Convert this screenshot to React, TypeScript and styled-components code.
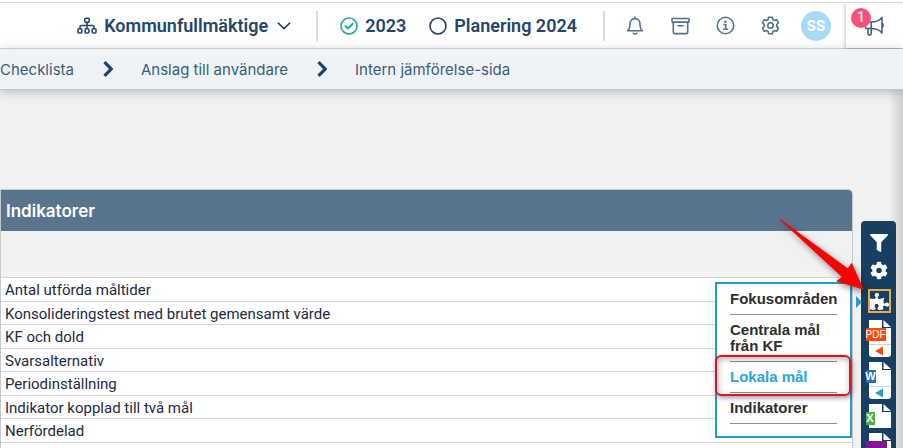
import React from "react";
import styled, { createGlobalStyle } from "styled-components";
import { FaFilter, FaCog, FaPuzzlePiece } from "react-icons/fa";

const GlobalStyle = createGlobalStyle`
  *, *::before, *::after { box-sizing: border-box; }
  html, body { margin: 0; padding: 0; overflow: hidden; background: #f1f1f1; }
  body { font-family: Roboto, "Liberation Sans", sans-serif; }
  button { font: inherit; color: inherit; background: none; border: 0; padding: 0; cursor: pointer; }
`;

const Page = styled.div`
  position: relative;
  height: 100vh;
  overflow: hidden;
  display: flex;
  flex-direction: column;
`;

const Header = styled.header`
  display: flex;
  justify-content: flex-end;
  align-items: stretch;
  flex: none;
  height: 49px;
  padding-top: 3px;
  background: linear-gradient(#fff 2px, #d9dadd 2px, #d9dadd 3px, #fff 3px);
  border-bottom: 1px solid #d3dbe2;
  color: #24466b;
`;

const HeaderGroup = styled.div<{ $gap: number; $left: number; $right: number }>`
  display: flex;
  align-items: center;
  gap: ${(p) => p.$gap}px;
  padding: 0 ${(p) => p.$right}px 0 ${(p) => p.$left}px;
`;

const Divider = styled.span`
  align-self: center;
  width: 2px;
  height: 30px;
  background: #d5dde4;
`;

const HeaderButton = styled.button`
  display: flex;
  align-items: center;
  gap: 7px;
  font-size: 18px;
  line-height: 24px;
  font-weight: 600;
  white-space: nowrap;
  svg { flex: none; }
`;

const IconButton = styled.button`
  display: flex;
  width: 20px;
  height: 20px;
  align-items: center;
  justify-content: center;
  color: #50718e;
`;

const Avatar = styled.button`
  width: 30px;
  height: 30px;
  margin-right: 15px;
  align-self: center;
  border-radius: 50%;
  background: #a6daf7;
  color: #fff;
  font-family: Inter, sans-serif;
  font-size: 14px;
  font-weight: 700;
  line-height: 30px;
  text-align: center;
`;

const NewsButton = styled.button`
  position: relative;
  width: 57px;
  display: flex;
  align-items: center;
  justify-content: center;
  padding-right: 1px;
  background: #fff;
  color: #42637f;
  box-shadow: 0 1px 4px rgba(40, 70, 100, 0.45);
  clip-path: inset(0 0 -4px -4px);
`;

const Badge = styled.span`
  position: absolute;
  left: 5px;
  top: 5px;
  width: 20px;
  height: 20px;
  border-radius: 50%;
  background: #fb4f78;
  color: #fff;
  font-size: 14px;
  font-weight: 500;
  line-height: 19px;
  text-align: center;
`;

const Breadcrumbs = styled.nav`
  position: relative;
  display: flex;
  align-items: center;
  flex: none;
  gap: 28px;
  height: 41px;
  background: #eff3f5;
  border-bottom: 1px solid #c0c8cf;
  box-shadow: 0 2px 10px rgba(60, 80, 100, 0.35);
  color: #1b4466;
`;

const Crumb = styled.a`
  padding-top: 2px;
  color: #38607e;
  font-family: Inter, sans-serif;
  font-size: 15px;
  line-height: 20px;
  text-decoration: none;
  white-space: nowrap;
`;

const Main = styled.main`
  display: flex;
  align-items: flex-start;
  flex: 1;
  gap: 8px;
  padding: 99px 7px 0 0;
  background: linear-gradient(to left, #cfcfcf, #f1f1f1 14px);
`;

const TableFrame = styled.div`
  flex: 1;
  border: 1px solid #c3c8ce;
  border-radius: 0 5px 0 0;
  overflow: hidden;
`;

const Table = styled.table`
  width: 100%;
  border-collapse: collapse;
  color: #222b3f;
  font-size: 15px;
  line-height: 20px;
`;

const HeadCell = styled.th`
  height: 41px;
  padding: 0 5px;
  background: #58758d;
  color: #fff;
  font-family: Inter, sans-serif;
  font-size: 17px;
  font-weight: 600;
  text-align: left;
`;

const FilterCell = styled.td`
  height: 46px;
  padding: 0;
  background: #f1f1f1;
  border-bottom: 1px solid #d3d5d8;
`;

const Row = styled.tr`
  height: 23px;
  background: #fff;
  &:nth-child(odd) { height: 24px; }
`;

const Cell = styled.td`
  padding: 2px 4px 0;
  border-bottom: 1px solid #d3d5d8;
`;

const Toolbar = styled.aside`
  position: relative;
  flex: none;
  display: flex;
  flex-direction: column;
  align-items: center;
  width: 35px;
  margin-top: 32px;
  padding: 12px 0;
  border-radius: 4px;
  background: #163f61;
  color: #fff;
`;

const Tool = styled.button<{ $active?: boolean }>`
  display: flex;
  align-items: center;
  justify-content: center;
  width: ${(p) => (p.$active ? 23 : 18)}px;
  height: ${(p) => (p.$active ? 24 : 19)}px;
  margin-bottom: ${(p) => (p.$active ? 7 : 9)}px;
  margin-left: ${(p) => (p.$active ? 2 : 0)}px;
  border: ${(p) => (p.$active ? "2px solid #eda951" : "0")};
`;

const DocTool = styled.button<{ $tall?: boolean }>`
  position: relative;
  display: block;
  width: 22px;
  height: ${(p) => (p.$tall ? 37 : 24)}px;
  margin: 0 0 5px 2px;
  svg { display: block; }
`;

const DocLabel = styled.span<{ $color: string; $w: number }>`
  position: absolute;
  left: -3px;
  top: 8px;
  width: ${(p) => p.$w}px;
  height: 13px;
  display: flex;
  justify-content: center;
  background: ${(p) => p.$color};
  color: #fff;
  font-family: "Liberation Sans", sans-serif;
  font-size: ${(p) => (p.$w === 20 ? 10 : 11)}px;
  font-weight: ${(p) => (p.$w === 20 ? 400 : 700)};
  line-height: 13px;
`;

const Pointer = styled.span`
  position: absolute;
  left: -5px;
  top: 75px;
  border: 6px solid transparent;
  border-right: 0;
  border-left: 6px solid #2a9ac8;
`;

const Menu = styled.nav`
  position: absolute;
  right: 44px;
  top: 61px;
  width: 137px;
  padding: 0 13px 12px;
  border: 2px solid #2a9ac8;
  background: #fff;
`;

const MenuLink = styled.a<{ $current?: boolean }>`
  display: block;
  padding: 7px 0;
  border-bottom: 1px solid #8f8f8f;
  color: ${(p) => (p.$current ? "#2ea3dd" : "#2e2e2e")};
  font-family: "Liberation Sans", Arial, sans-serif;
  font-size: 15px;
  font-weight: 700;
  line-height: 16px;
  text-decoration: none;
`;

const Highlight = styled.span`
  position: absolute;
  right: 45px;
  top: 134px;
  width: 136px;
  height: 41px;
  border: 2px solid #dc1620;
  border-radius: 6px;
  box-shadow: 1px 2px 5px rgba(0, 0, 0, 0.4), inset 1px 2px 6px rgba(0, 0, 0, 0.3);
  pointer-events: none;
`;

const Arrow = styled.svg`
  position: absolute;
  right: 31px;
  top: -12px;
  overflow: visible;
  filter: drop-shadow(2px 3px 3px rgba(0, 0, 0, 0.45));
  pointer-events: none;
`;

const stroke = {
  fill: "none",
  stroke: "currentColor",
  strokeWidth: 1.6,
  strokeLinecap: "round" as const,
  strokeLinejoin: "round" as const,
};

const OrgIcon = () => (
  <svg width="20" height="18" viewBox="0 0 20 18" {...stroke}>
    <rect x="7.8" y="1.2" width="4.4" height="4.2" rx="1" />
    <path d="M10 5.5v6M3 11.5V9.800a1.300 1.300 0 0 1 1.300-1.300h11.400A1.300 1.300 0 0 1 17 9.800v1.700" />
    <rect x="1" y="11.8" width="3.8" height="4.2" rx="1" />
    <rect x="8.1" y="11.8" width="3.8" height="4.2" rx="1" />
    <rect x="15.2" y="11.8" width="3.8" height="4.2" rx="1" />
  </svg>
);

const ChevronDown = () => (
  <svg width="16" height="8" viewBox="0 0 16 8" {...stroke}>
    <path d="M3.300 1.200 9 6.600l5.700-5.400" />
  </svg>
);

const ChevronRight = () => (
  <svg width="11" height="16" viewBox="0 0 11 16" fill="none" stroke="currentColor" strokeWidth="3.2">
    <path d="M2.500 1.200 9.300 8l-6.800 6.800" />
  </svg>
);

const CheckCircle = () => (
  <svg width="18" height="18" viewBox="0 0 18 18" {...stroke} stroke="#1fa9ab">
    <circle cx="9" cy="9" r="8" />
    <path d="m5.500 9.200 2.500 2.300 4.600-4.600" strokeWidth="2" />
  </svg>
);

const EmptyCircle = () => (
  <svg width="18" height="18" viewBox="0 0 18 18" {...stroke}>
    <circle cx="9" cy="9" r="8" />
  </svg>
);

const BellIcon = () => (
  <svg width="18" height="19" viewBox="0 0 18 19" {...stroke}>
    <path d="M9 1v1.500M1.700 14.700c1.700-1.300 2.300-3 2.300-7C4 4.700 6.200 2.600 9 2.600s5 2.100 5 5.100c0 4 .6 5.700 2.300 7zM7.300 17.300c.8.800 2.600.8 3.400 0" />
  </svg>
);

const ArchiveIcon = () => (
  <svg width="19" height="18" viewBox="0 0 19 18" {...stroke}>
    <rect x="1" y="1.5" width="17" height="3.6" rx=".6" />
    <path d="M2.300 5.200v10a1.400 1.400 0 0 0 1.400 1.400h11.600a1.400 1.400 0 0 0 1.400-1.400v-10M7 8.800h5" />
  </svg>
);

const InfoIcon = () => (
  <svg width="19" height="19" viewBox="0 0 19 19" {...stroke}>
    <circle cx="9.5" cy="9.5" r="8.2" />
    <path d="M8 8.500h1.700v4.700M7.700 13.300h4" />
    <circle cx="9.4" cy="5.7" r=".5" />
  </svg>
);

const GearIcon = () => (
  <svg width="19" height="19" viewBox="0 0 19 19" {...stroke}>
    <path d="M7.700 1.200h3.600l.6 2.300 1.500.9 2.300-.7 1.800 3.100-1.700 1.700v2l1.700 1.700-1.800 3.100-2.300-.7-1.500.9-.6 2.300H7.700l-.6-2.300-1.500-.9-2.300.7-1.800-3.100 1.700-1.700v-2L1.500 6.800l1.800-3.100 2.300.7 1.500-.9z" />
    <circle cx="9.5" cy="9.5" r="2.7" />
  </svg>
);

const MegaphoneIcon = () => (
  <svg width="20" height="20" viewBox="0 0 20 20" {...stroke}>
    <path d="M18 1.500v15.500C15.500 14 12 12.500 7.500 12.500H3A1.500 1.500 0 0 1 1.500 11V7.500A1.500 1.500 0 0 1 3 6h4.500C12 6 15.500 4.500 18 1.500zM7.200 6v11.500a1.500 1.500 0 0 1-3.200 0v-5M19 8v2.600" />
  </svg>
);

const PageShape = ({ tip }: { tip?: string }) => (
  <svg width="22" height={tip ? 37 : 24} viewBox={tip ? "0 0 22 37" : "0 0 22 24"}>
    <path fill="#fff" d="M0 0h13v8h9v16H0z" />
    <path fill="#fff" d="M14.500 0 22 7h-7.500z" />
    {tip && (
      <>
        <path fill="#fff" d="M0 25h22v9a3 3 0 0 1-3 3H3a3 3 0 0 1-3-3z" />
        <path fill="#cbd2d8" d="M0 24h22v1H0z" />
        <path fill={tip} d="M6 31l8-4.500v9z" />
      </>
    )}
  </svg>
);

const crumbs = ["Checklista", "Anslag till användare", "Intern jämförelse-sida"];

const indicators = [
  "Antal utförda måltider",
  "Konsolideringstest med brutet gemensamt värde",
  "KF och dold",
  "Svarsalternativ",
  "Periodinställning",
  "Indikator kopplad till två mål",
  "Nerfördelad",
  "Kostnader för",
];

const documents = [
  { name: "PDF", label: "PDF", color: "#fb4a0b", width: 20, tip: "#fb4a0b" },
  { name: "Word", label: "W", color: "#2b6cc4", width: 10, tip: "#2a9ac8" },
  { name: "Excel", label: "X", color: "#4cb043", width: 9 },
  { name: "OneNote", label: "", color: "#80178f", width: 21 },
];

export default function App() {
  return (
    <Page>
      <GlobalStyle />
      <Header>
        <HeaderGroup $gap={0} $left={0} $right={25}>
          <HeaderButton>
            <OrgIcon />
            Kommunfullmäktige
            <ChevronDown />
          </HeaderButton>
        </HeaderGroup>
        <Divider />
        <HeaderGroup $gap={23} $left={22} $right={26}>
          <HeaderButton>
            <CheckCircle />
            2023
          </HeaderButton>
          <HeaderButton>
            <EmptyCircle />
            Planering 2024
          </HeaderButton>
        </HeaderGroup>
        <Divider />
        <HeaderGroup $gap={25} $left={20} $right={21}>
          <IconButton aria-label="Notiser"><BellIcon /></IconButton>
          <IconButton aria-label="Arkiv"><ArchiveIcon /></IconButton>
          <IconButton aria-label="Information"><InfoIcon /></IconButton>
          <IconButton aria-label="Inställningar"><GearIcon /></IconButton>
        </HeaderGroup>
        <Avatar>SS</Avatar>
        <NewsButton aria-label="Nyheter">
          <MegaphoneIcon />
          <Badge>1</Badge>
        </NewsButton>
      </Header>
      <Breadcrumbs aria-label="Sökväg">
        {crumbs.map((text, i) => (
          <React.Fragment key={text}>
            {i > 0 && <ChevronRight />}
            <Crumb href="#">{text}</Crumb>
          </React.Fragment>
        ))}
      </Breadcrumbs>
      <Main>
        <TableFrame>
          <Table>
            <thead>
              <tr><HeadCell>Indikatorer</HeadCell></tr>
              <tr><FilterCell /></tr>
            </thead>
            <tbody>
              {indicators.map((text) => (
                <Row key={text}><Cell>{text}</Cell></Row>
              ))}
            </tbody>
          </Table>
        </TableFrame>
        <Toolbar>
          <Tool aria-label="Filter"><FaFilter size={18} /></Tool>
          <Tool aria-label="Inställningar"><FaCog size={19} /></Tool>
          <Tool aria-label="Moduler" $active><FaPuzzlePiece size={19} /></Tool>
          {documents.map((doc) => (
            <DocTool key={doc.name} aria-label={doc.name} $tall={!!doc.tip}>
              <PageShape tip={doc.tip} />
              <DocLabel $color={doc.color} $w={doc.width}>{doc.label}</DocLabel>
            </DocTool>
          ))}
          <Pointer />
          <Menu aria-label="Moduler">
            <MenuLink href="#">Fokusområden</MenuLink>
            <MenuLink href="#">Centrala mål från KF</MenuLink>
            <MenuLink href="#" $current>Lokala mål</MenuLink>
            <MenuLink href="#">Indikatorer</MenuLink>
          </Menu>
          <Highlight />
          <Arrow width="94" height="80" viewBox="0 0 94 80" aria-hidden="true">
            <path fill="#fe0000" stroke="#fe0000" strokeLinejoin="round" d="M9 10.500 77 60 80.500 54.500 92 80 66 72 71.500 68z" />
          </Arrow>
        </Toolbar>
      </Main>
    </Page>
  );
}
